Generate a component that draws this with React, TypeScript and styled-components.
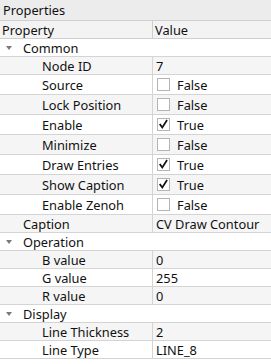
import React from 'react';
import styled, { createGlobalStyle } from 'styled-components';

const GlobalStyle = createGlobalStyle`
  html, body {
    margin: 0;
    padding: 0;
    background: #ffffff;
  }
  body {
    font-family: "Noto Sans", "DejaVu Sans", sans-serif;
    font-size: 12.8px;
    color: #111111;
  }
`;

const Panel = styled.div`
  width: 271px;
  height: 364px;
  overflow: hidden;
  background: #ffffff;
  display: flex;
  flex-direction: column;
`;

const TitleBar = styled.div`
  height: 20px;
  flex: none;
  display: flex;
  align-items: center;
  padding-left: 3px;
  background: #ececec;
`;

const HeaderRow = styled.div`
  height: 19px;
  flex: none;
  box-sizing: border-box;
  display: grid;
  grid-template-columns: 153px 1fr;
  background: #f3f3f3;
  border-top: 1px solid #cfcfcf;
  border-bottom: 1px solid #cfcfcf;
`;

const HeaderCell = styled.div<{ $first?: boolean }>`
  display: flex;
  align-items: center;
  padding-left: 2px;
  border-right: ${({ $first }) => ($first ? '1px solid #cfcfcf' : 'none')};
`;

const Row = styled.div<{ $alt: boolean; $tall?: boolean }>`
  height: ${({ $tall }) => ($tall ? '20px' : '18px')};
  flex: none;
  box-sizing: border-box;
  display: grid;
  grid-template-columns: 153px 1fr;
  background: ${({ $alt }) => ($alt ? '#f5f5f5' : '#ffffff')};
  border-bottom: 1px solid #d4d4d4;
`;

const NameCell = styled.div<{ $level: number; $group?: boolean }>`
  display: flex;
  align-items: center;
  padding-left: ${({ $level }) => ($level === 0 ? 6 : $level === 1 ? 23 : 42)}px;
  border-right: ${({ $group }) => ($group ? 'none' : '1px solid #d4d4d4')};
  white-space: nowrap;
  overflow: hidden;
`;

const ValueCell = styled.div`
  display: flex;
  align-items: center;
  padding-left: 3px;
  white-space: nowrap;
  overflow: hidden;
`;

const Arrow = styled.span`
  width: 0;
  height: 0;
  margin-right: 11px;
  border-left: 3px solid transparent;
  border-right: 3px solid transparent;
  border-top: 4px solid #7a7a7a;
`;

const CheckBox = styled.span`
  width: 13px;
  height: 13px;
  box-sizing: border-box;
  border: 1px solid #b4b4b4;
  background: #ffffff;
  margin-left: 1px;
  margin-right: 7px;
  display: flex;
  align-items: center;
  justify-content: center;
`;

type Item =
  | { kind: 'group'; name: string }
  | { kind: 'text'; name: string; level: number; value: string }
  | { kind: 'bool'; name: string; level: number; value: boolean };

const items: Item[] = [
  { kind: 'group', name: 'Common' },
  { kind: 'text', name: 'Node ID', level: 2, value: '7' },
  { kind: 'bool', name: 'Source', level: 2, value: false },
  { kind: 'bool', name: 'Lock Position', level: 2, value: false },
  { kind: 'bool', name: 'Enable', level: 2, value: true },
  { kind: 'bool', name: 'Minimize', level: 2, value: false },
  { kind: 'bool', name: 'Draw Entries', level: 2, value: true },
  { kind: 'bool', name: 'Show Caption', level: 2, value: true },
  { kind: 'bool', name: 'Enable Zenoh', level: 2, value: false },
  { kind: 'text', name: 'Caption', level: 1, value: 'CV Draw Contour' },
  { kind: 'group', name: 'Operation' },
  { kind: 'text', name: 'B value', level: 2, value: '0' },
  { kind: 'text', name: 'G value', level: 2, value: '255' },
  { kind: 'text', name: 'R value', level: 2, value: '0' },
  { kind: 'group', name: 'Display' },
  { kind: 'text', name: 'Line Thickness', level: 2, value: '2' },
  { kind: 'text', name: 'Line Type', level: 2, value: 'LINE_8' },
];

const Check: React.FC = () => (
  <svg width="11" height="11" viewBox="0 0 11 11">
    <path d="M2.2 5.6 L4.3 8.4 L8.6 1.8" fill="none" stroke="#111" strokeWidth="1.7" strokeLinecap="square" strokeLinejoin="miter" />
  </svg>
);

export default function App() {
  return (
    <>
      <GlobalStyle />
      <Panel>
        <TitleBar>Properties</TitleBar>
        <HeaderRow>
          <HeaderCell $first>Property</HeaderCell>
          <HeaderCell>Value</HeaderCell>
        </HeaderRow>
        {items.map((it, i) => {
          const alt = i % 2 === 1;
          if (it.kind === 'group') {
            return (
              <Row key={it.name} $alt={alt}>
                <NameCell $level={0} $group>
                  <Arrow />
                  {it.name}
                </NameCell>
                <ValueCell />
              </Row>
            );
          }
          return (
            <Row key={it.name} $alt={alt} $tall={it.kind === 'bool'}>
              <NameCell $level={it.level}>{it.name}</NameCell>
              <ValueCell>
                {it.kind === 'bool' ? (
                  <>
                    <CheckBox>{it.value && <Check />}</CheckBox>
                    {it.value ? 'True' : 'False'}
                  </>
                ) : (
                  it.value
                )}
              </ValueCell>
            </Row>
          );
        })}
      </Panel>
    </>
  );
}
